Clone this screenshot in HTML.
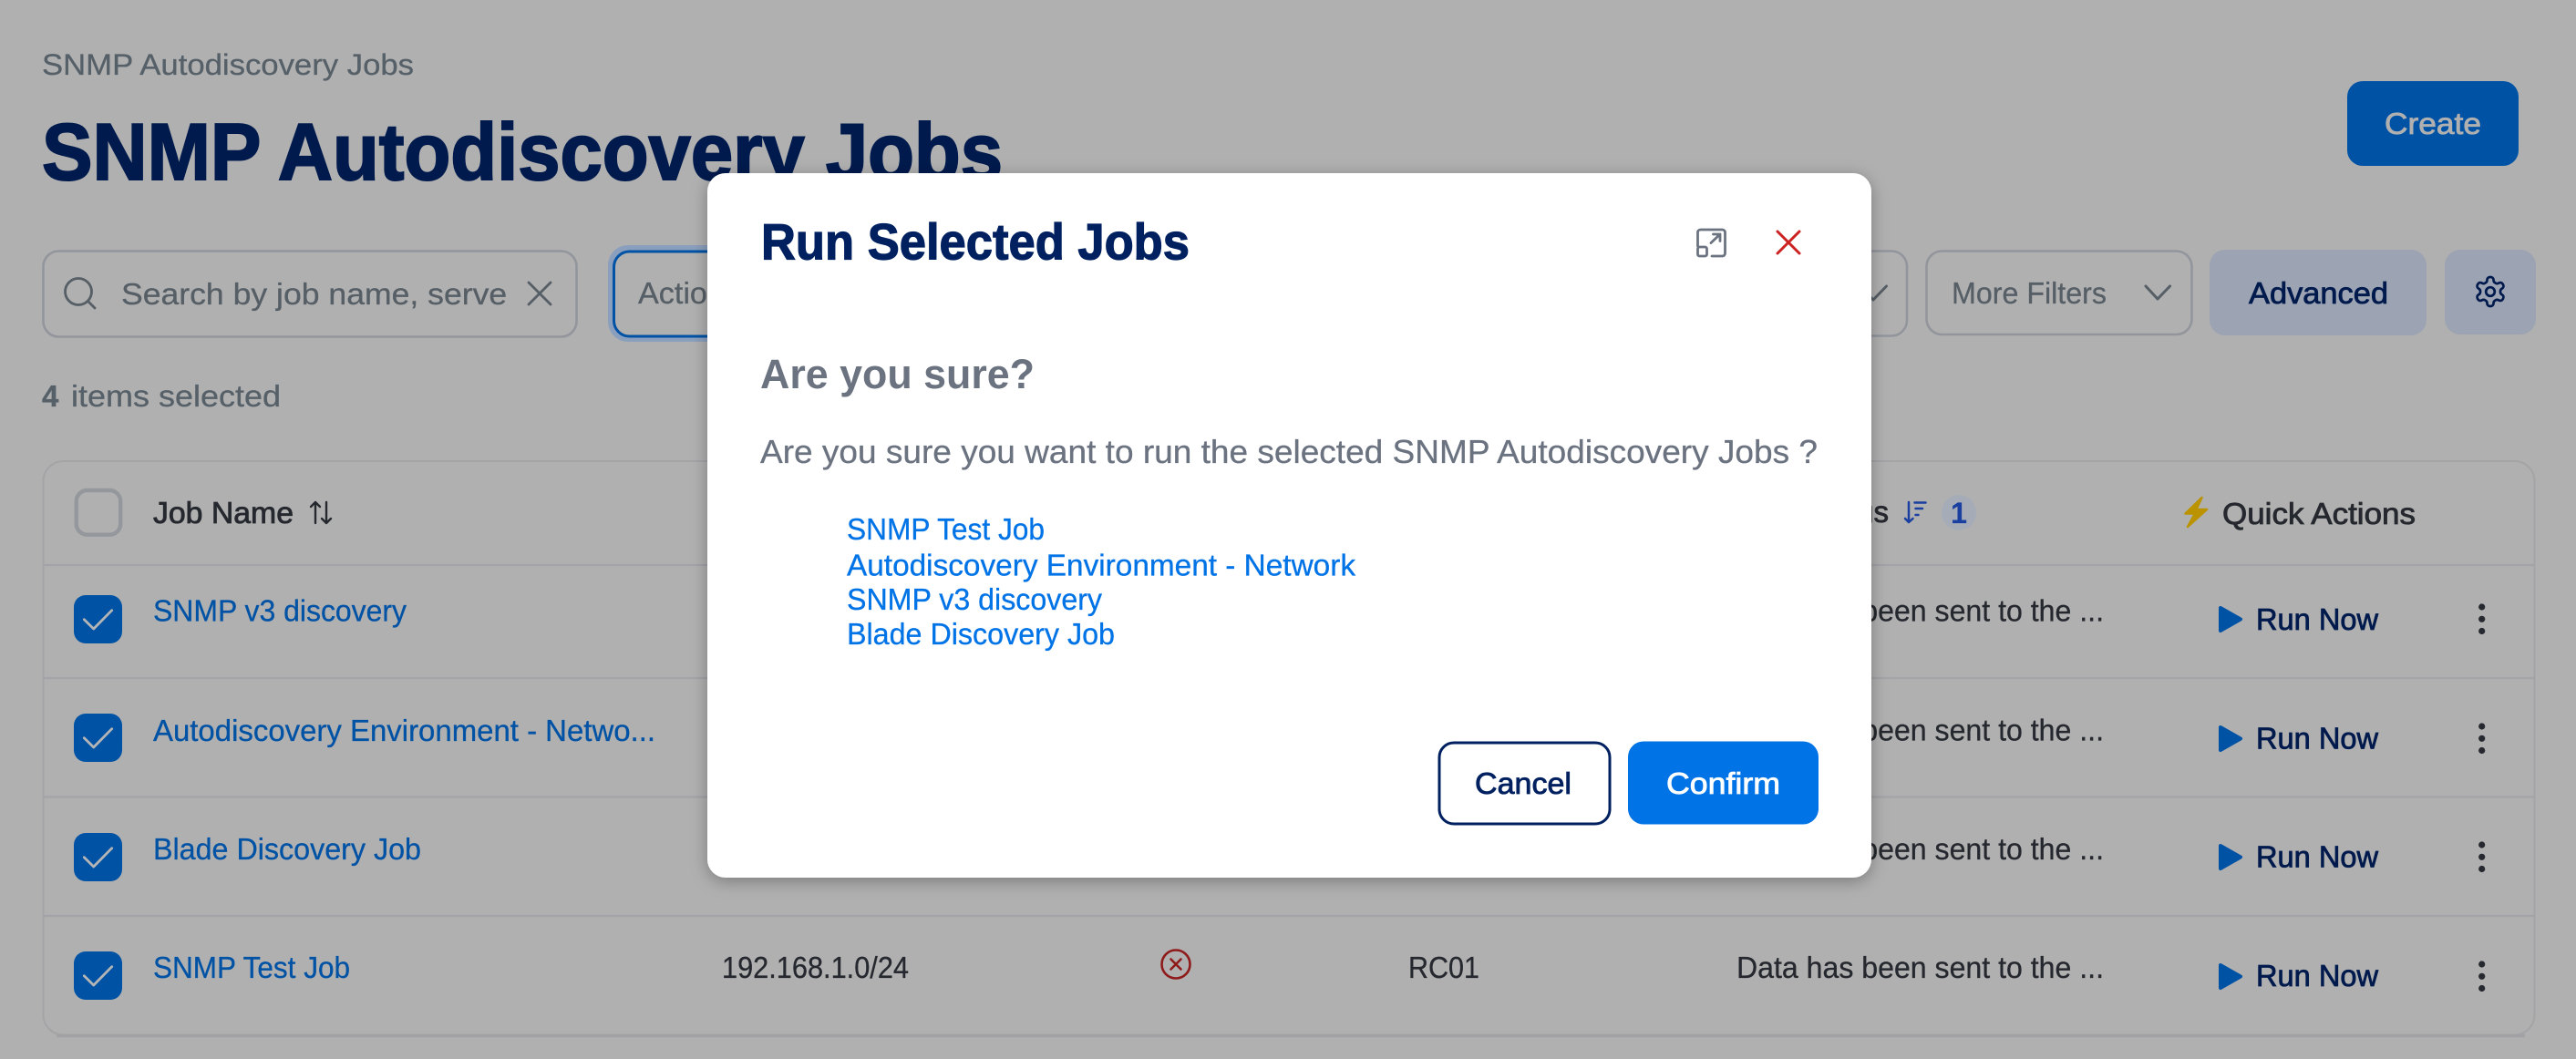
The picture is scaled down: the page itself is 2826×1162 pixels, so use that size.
<!DOCTYPE html>
<html lang="en"><head><meta charset="utf-8"><title>SNMP Autodiscovery Jobs</title>
<style>
html,body{margin:0;padding:0;background:#b0b0b0;width:2826px;height:1162px;overflow:hidden}
svg{display:block}
text{font-family:"Liberation Sans",sans-serif;font-size:33px;stroke:currentColor;stroke-width:.3px}
.m{stroke-width:.8px}
</style></head><body>
<svg xmlns="http://www.w3.org/2000/svg" width="2826" height="1162" viewBox="0 0 2826 1162">
<defs>
<clipPath id="ph"><rect x="130" y="290" width="425" height="60"/></clipPath>
<filter id="sh" x="-5%" y="-5%" width="110%" height="110%"><feDropShadow dx="0" dy="4" stdDeviation="9" flood-color="#000" flood-opacity=".3"/></filter>
<g id="cb"><rect x="0" y="0" width="53" height="53" rx="13" fill="#0052a5"/><path d="M11.3 26.7L21.7 37L41.7 16.7" fill="none" stroke="#b5b5b5" stroke-width="2.8" stroke-linecap="round" stroke-linejoin="round"/></g>
<path id="play" d="M2436 667L2458 679.5L2436 692Z" fill="#0052a5" stroke="#0052a5" stroke-width="4" stroke-linejoin="round"/>
<g id="dots" fill="#25282e"><circle cx="2722.7" cy="666" r="3.6"/><circle cx="2722.7" cy="679.3" r="3.6"/><circle cx="2722.7" cy="692.5" r="3.6"/></g>
</defs>
<rect width="2826" height="1162" fill="#b0b0b0"/>

<text x="46" y="82" color="#566068" fill="#566068" textLength="408" lengthAdjust="spacingAndGlyphs" style="font-size:32px">SNMP Autodiscovery Jobs</text>
<text x="46" y="197" color="#001a4d" fill="#001a4d" font-weight="700" textLength="1054" lengthAdjust="spacingAndGlyphs" style="font-size:88px;stroke-width:2px">SNMP Autodiscovery Jobs</text>

<rect x="2575" y="89" width="188" height="93" rx="17" fill="#0052a5"/>
<text x="2616" y="147" color="#b0b0b0" fill="#b0b0b0" class="m" textLength="106" lengthAdjust="spacingAndGlyphs">Create</text>

<rect x="47.5" y="275.5" width="585" height="94" rx="17" fill="none" stroke="#92969c" stroke-width="2.6"/>
<circle cx="86" cy="320" r="14.5" fill="none" stroke="#565e66" stroke-width="2.8"/>
<path d="M96.5 330.5L104 338" stroke="#565e66" stroke-width="2.8" stroke-linecap="round"/>
<text x="133" y="334" color="#565e66" fill="#565e66" clip-path="url(#ph)" textLength="435" lengthAdjust="spacingAndGlyphs">Search by job name, server</text>
<path d="M580 310L604 334M604 310L580 334" stroke="#565e66" stroke-width="2.8" stroke-linecap="round"/>

<rect x="667" y="269" width="200" height="106" rx="22" fill="#8a9fbd"/>
<rect x="673.5" y="276" width="190" height="93" rx="17" fill="#b0b0b0" stroke="#0052a5" stroke-width="3"/>
<text x="700" y="333" color="#565e66" fill="#565e66" textLength="112" lengthAdjust="spacingAndGlyphs">Actions</text>

<rect x="1980" y="275.5" width="112" height="93" rx="17" fill="none" stroke="#92969c" stroke-width="2.6"/>
<path d="M2040 314L2055 329L2069.5 314" fill="none" stroke="#565e66" stroke-width="3" stroke-linecap="round" stroke-linejoin="round"/>
<rect x="2113.5" y="275.5" width="291" height="91.5" rx="17" fill="none" stroke="#92969c" stroke-width="2.6"/>
<text x="2141" y="333" color="#565e66" fill="#565e66" textLength="170" lengthAdjust="spacingAndGlyphs">More Filters</text>
<path d="M2354 314L2367 328L2380.5 314" fill="none" stroke="#565e66" stroke-width="3" stroke-linecap="round" stroke-linejoin="round"/>
<rect x="2424" y="274" width="238" height="94" rx="17" fill="#9ca3b2"/>
<text x="2467" y="333" color="#001a4d" fill="#001a4d" class="m" textLength="153" lengthAdjust="spacingAndGlyphs">Advanced</text>
<rect x="2682" y="274" width="100" height="93" rx="17" fill="#9ca3b2"/>
<g transform="translate(2712.8 300.8) scale(1.6)" fill="none" stroke="#001a4d" stroke-width="1.7" stroke-linecap="round" stroke-linejoin="round"><path d="M12.22 2h-.44a2 2 0 0 0-2 2v.18a2 2 0 0 1-1 1.73l-.43.25a2 2 0 0 1-2 0l-.15-.08a2 2 0 0 0-2.73.73l-.22.38a2 2 0 0 0 .73 2.73l.15.1a2 2 0 0 1 1 1.72v.51a2 2 0 0 1-1 1.74l-.15.09a2 2 0 0 0-.73 2.73l.22.38a2 2 0 0 0 2.73.73l.15-.08a2 2 0 0 1 2 0l.43.25a2 2 0 0 1 1 1.73V20a2 2 0 0 0 2 2h.44a2 2 0 0 0 2-2v-.18a2 2 0 0 1 1-1.73l.43-.25a2 2 0 0 1 2 0l.15.08a2 2 0 0 0 2.73-.73l.22-.39a2 2 0 0 0-.73-2.73l-.15-.08a2 2 0 0 1-1-1.74v-.5a2 2 0 0 1 1-1.74l.15-.09a2 2 0 0 0 .73-2.73l-.22-.38a2 2 0 0 0-2.73-.73l-.15.08a2 2 0 0 1-2 0l-.43-.25a2 2 0 0 1-1-1.73V4a2 2 0 0 0-2-2z"/><circle cx="12" cy="12" r="3"/></g>

<text x="46" y="446" color="#566068" fill="#566068" font-weight="700">4</text>
<text x="78" y="446" color="#566068" fill="#566068" textLength="230" lengthAdjust="spacingAndGlyphs">items selected</text>

<path d="M47.5 1113V528a22 22 0 0 1 22-22H2758.5a22 22 0 0 1 22 22V1113" fill="none" stroke="#a4a4a7" stroke-width="2"/>
<path d="M47.5 1113a22 22 0 0 0 22 22.5H2758.5a22 22 0 0 0 22-22.5" fill="none" stroke="#a4a4a7" stroke-width="2"/>
<path d="M62 1136.5H2770" stroke="#a2a2a5" stroke-width="3.5"/>
<path d="M48 620H2780M48 744H2780M48 874.5H2780M48 1005H2780" stroke="#a3a3a8" stroke-width="2.2"/>

<rect x="83.7" y="538" width="48.5" height="48.7" rx="12" fill="none" stroke="#94989d" stroke-width="4.4"/>
<text x="168" y="574" color="#25282e" fill="#25282e" class="m" textLength="154" lengthAdjust="spacingAndGlyphs">Job Name</text>
<path d="M346 574V551M341 556L346 551L351 556M358 551V574M353 569L358 574L363 569" fill="none" stroke="#25282e" stroke-width="2.4" stroke-linecap="round" stroke-linejoin="round"/>

<text x="2072" y="573" text-anchor="end" color="#25282e" fill="#25282e" class="m">Status</text>
<path d="M2094 551V573M2090 569L2094 573L2098.5 569M2100.5 551.5H2112.5M2101.5 558H2109M2101.5 565H2104.5" fill="none" stroke="#1a3fa0" stroke-width="2.5" stroke-linecap="round" stroke-linejoin="round"/>
<rect x="2130" y="543" width="38" height="39" rx="19" fill="#a6acb7"/>
<text x="2149" y="574" text-anchor="middle" color="#1a3fa0" fill="#1a3fa0" font-weight="700" style="font-size:32px">1</text>

<path d="M2415.5 546L2397.5 563.5H2408L2400 578L2421 559H2409.5Z" fill="#bb9300" stroke="#bb9300" stroke-width="2.5" stroke-linejoin="round"/>
<text x="2438" y="575" color="#25282e" fill="#25282e" class="m" textLength="212" lengthAdjust="spacingAndGlyphs">Quick Actions</text>

<use href="#cb" x="81" y="653"/><use href="#cb" x="81" y="783"/><use href="#cb" x="81" y="914"/><use href="#cb" x="81" y="1044"/>
<g fill="#0052a5" color="#0052a5">
<text x="168" y="681.5" textLength="278" lengthAdjust="spacingAndGlyphs">SNMP v3 discovery</text>
<text x="168" y="813" textLength="551" lengthAdjust="spacingAndGlyphs">Autodiscovery Environment - Netwo...</text>
<text x="168" y="943" textLength="294" lengthAdjust="spacingAndGlyphs">Blade Discovery Job</text>
<text x="168" y="1073" textLength="216" lengthAdjust="spacingAndGlyphs">SNMP Test Job</text>
</g>
<g fill="#25282e" color="#25282e">
<text x="792" y="1073" textLength="205" lengthAdjust="spacingAndGlyphs">192.168.1.0/24</text>
<text x="1545" y="1073" textLength="78" lengthAdjust="spacingAndGlyphs">RC01</text>
<text x="1905" y="681.7" textLength="403" lengthAdjust="spacingAndGlyphs">Data has been sent to the ...</text>
<text x="1905" y="812.7" textLength="403" lengthAdjust="spacingAndGlyphs">Data has been sent to the ...</text>
<text x="1905" y="943" textLength="403" lengthAdjust="spacingAndGlyphs">Data has been sent to the ...</text>
<text x="1905" y="1073" textLength="403" lengthAdjust="spacingAndGlyphs">Data has been sent to the ...</text>
</g>
<circle cx="1290" cy="1058" r="15.5" fill="none" stroke="#8f1a1a" stroke-width="2.6"/>
<path d="M1284.5 1052.5L1295.5 1063.5M1295.5 1052.5L1284.5 1063.5" stroke="#8f1a1a" stroke-width="2.6" stroke-linecap="round"/>

<use href="#play"/><use href="#play" y="131"/><use href="#play" y="261"/><use href="#play" y="392"/>
<g fill="#001a4d" color="#001a4d">
<text class="m" x="2475" y="691" textLength="134" lengthAdjust="spacingAndGlyphs">Run Now</text>
<text class="m" x="2475" y="821.5" textLength="134" lengthAdjust="spacingAndGlyphs">Run Now</text>
<text class="m" x="2475" y="951.5" textLength="134" lengthAdjust="spacingAndGlyphs">Run Now</text>
<text class="m" x="2475" y="1082" textLength="134" lengthAdjust="spacingAndGlyphs">Run Now</text>
</g>
<use href="#dots"/><use href="#dots" y="131"/><use href="#dots" y="261"/><use href="#dots" y="392"/>

<!-- modal -->
<rect x="776" y="190" width="1277" height="773" rx="20" fill="#fff" filter="url(#sh)"/>
<text x="835" y="284.5" color="#002060" fill="#002060" font-weight="700" textLength="470" lengthAdjust="spacingAndGlyphs" style="font-size:56px;stroke-width:1.2px">Run Selected Jobs</text>
<path d="M1862.5 270V255a3 3 0 0 1 3-3H1889.5a3 3 0 0 1 3 3V278a3 3 0 0 1-3 3H1878" fill="none" stroke="#6b7280" stroke-width="2.8" stroke-linecap="round"/>
<rect x="1862.5" y="271" width="10" height="10" rx="2" fill="none" stroke="#6b7280" stroke-width="2.8"/>
<path d="M1877 266.5L1887 257M1879.5 257H1887V264.5" fill="none" stroke="#6b7280" stroke-width="2.8" stroke-linecap="round" stroke-linejoin="round"/>
<path d="M1950 254L1974 278M1974 254L1950 278" stroke="#cc2222" stroke-width="3" stroke-linecap="round"/>
<text x="834" y="426" color="#6b7280" fill="#6b7280" font-weight="700" textLength="301" lengthAdjust="spacingAndGlyphs" style="font-size:45px;stroke-width:0">Are you sure?</text>
<text x="834" y="508" color="#6b7280" fill="#6b7280" textLength="1160" lengthAdjust="spacingAndGlyphs" style="font-size:36px">Are you sure you want to run the selected SNMP Autodiscovery Jobs ?</text>
<g fill="#0073e6" color="#0073e6">
<text x="929" y="592" textLength="217" lengthAdjust="spacingAndGlyphs">SNMP Test Job</text>
<text x="929" y="631.5" textLength="558" lengthAdjust="spacingAndGlyphs">Autodiscovery Environment - Network</text>
<text x="929" y="669" textLength="280" lengthAdjust="spacingAndGlyphs">SNMP v3 discovery</text>
<text x="929" y="707" textLength="294" lengthAdjust="spacingAndGlyphs">Blade Discovery Job</text>
</g>
<rect x="1579" y="815" width="187" height="89" rx="16" fill="#fff" stroke="#002060" stroke-width="3"/>
<text x="1618" y="871" color="#002060" fill="#002060" class="m" textLength="106" lengthAdjust="spacingAndGlyphs">Cancel</text>
<rect x="1786" y="813.5" width="209" height="91" rx="17" fill="#0073e6"/>
<text x="1828" y="871" color="#fff" fill="#fff" class="m" textLength="125" lengthAdjust="spacingAndGlyphs">Confirm</text>
</svg>
</body></html>
